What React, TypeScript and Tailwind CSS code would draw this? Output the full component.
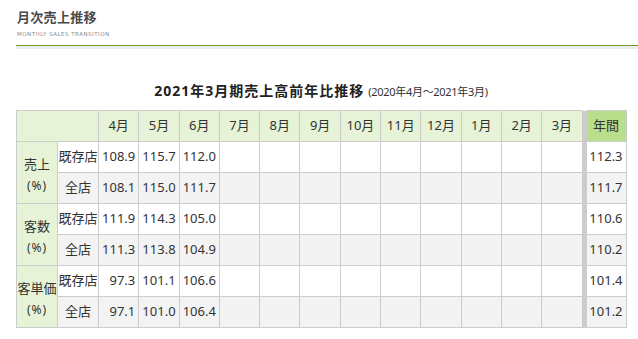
const months = ["4月", "5月", "6月", "7月", "8月", "9月", "10月", "11月", "12月", "1月", "2月", "3月"];

type Row = { store: string; values: string[]; year: string };
type Group = { label: string[]; rows: Row[] };

const groups: Group[] = [
  {
    label: ["売上", "(%)"],
    rows: [
      { store: "既存店", values: ["108.9", "115.7", "112.0"], year: "112.3" },
      { store: "全店", values: ["108.1", "115.0", "111.7"], year: "111.7" },
    ],
  },
  {
    label: ["客数", "(%)"],
    rows: [
      { store: "既存店", values: ["111.9", "114.3", "105.0"], year: "110.6" },
      { store: "全店", values: ["111.3", "113.8", "104.9"], year: "110.2" },
    ],
  },
  {
    label: ["客単価", "(%)"],
    rows: [
      { store: "既存店", values: ["97.3", "101.1", "106.6"], year: "101.4" },
      { store: "全店", values: ["97.1", "101.0", "106.4"], year: "101.2" },
    ],
  },
];

const cell = "border border-[#cccccc] h-[31px] p-0";

export default function App() {
  return (
    <div
      className="w-[638px] h-[339px] bg-white overflow-hidden text-[#333]"
      style={{ fontFamily: '"Noto Sans", "Noto Sans CJK JP", sans-serif' }}
    >
      <div className="pl-[17px] pt-[9px]">
        <h1 className="text-[13px] leading-[16px] font-bold text-[#4a4a4a] tracking-[0.3px]">月次売上推移</h1>
        <p
          className="mt-[6px] text-[5.5px] leading-[7px] tracking-[0.5px] text-[#888]"
          style={{ fontFamily: '"DejaVu Sans", sans-serif' }}
        >
          MONTHLY SALES TRANSITION
        </p>
      </div>
      <div className="ml-[16px] mt-[7px] border-t border-[#6f9a25]">
        <div className="h-[3px] bg-[#ececec]" />
      </div>

      <h2 className="mt-[31px] text-center pl-[4px] leading-[20px]">
        <span className="text-[14px] font-bold tracking-[1px] text-[#222]">2021年3月期売上高前年比推移</span>
        <span className="text-[11px] tracking-[-0.3px] ml-[4px]">(2020年4月～2021年3月)</span>
      </h2>

      <table className="ml-[16px] mt-[8px] border-collapse table-fixed text-[13px] w-[609px]">
        <colgroup>
          <col className="w-[41px]" />
          <col className="w-[41px]" />
          {months.map((m) => (
            <col key={m} className="w-[40.3px]" />
          ))}
          <col className="w-[4px]" />
          <col className="w-[40px]" />
        </colgroup>
        <thead>
          <tr className="bg-[#e6f3d6]">
            <th colSpan={2} className={`${cell} h-[30px]`} />
            {months.map((m) => (
              <th key={m} className={`${cell} h-[30px] font-normal text-center`}>
                {m}
              </th>
            ))}
            <th className="bg-[#cccccc] p-0" />
            <th className={`${cell} h-[30px] bg-[#b9df8d] font-normal text-center`}>年間</th>
          </tr>
        </thead>
        <tbody>
          {groups.map((g) =>
            g.rows.map((r, i) => (
              <tr key={g.label[0] + r.store} className={i === 0 ? "bg-white" : "bg-[#f3f3f3]"}>
                {i === 0 && (
                  <td rowSpan={2} className={`${cell} bg-[#e6f3d6] text-center leading-[22px] pt-[4px]`}>
                    <div className="whitespace-nowrap">{g.label[0]}</div>
                    <div className="text-[12px] tracking-[1px]">{g.label[1]}</div>
                  </td>
                )}
                <td className={`${cell} text-center whitespace-nowrap`}>{r.store}</td>
                {months.map((m, k) => (
                  <td key={m} className={`${cell} text-right pr-[3px] whitespace-nowrap`}>
                    {r.values[k] ?? ""}
                  </td>
                ))}
                <td className="bg-[#cccccc] p-0" />
                <td className={`${cell} text-right pr-[3px]`}>{r.year}</td>
              </tr>
            )),
          )}
        </tbody>
      </table>
    </div>
  );
}
